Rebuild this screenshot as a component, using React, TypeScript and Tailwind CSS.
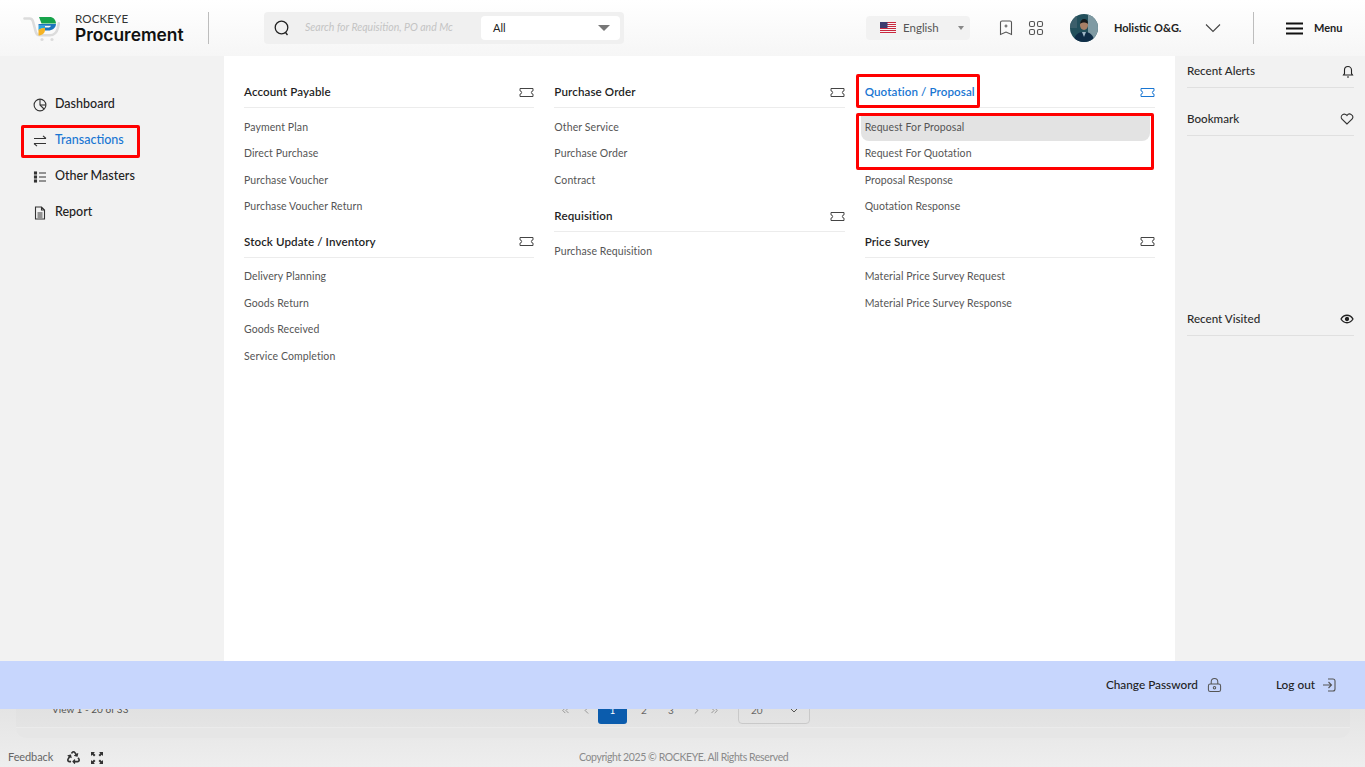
import React from "react";
import { ChevronsLeft, ChevronLeft, ChevronRight, ChevronsRight } from "lucide-react";
import { FaRecycle } from "react-icons/fa";

const Ticket = ({ blue }: { blue?: boolean }) => (
  <svg width="15" height="11" viewBox="0 0 15 11" fill="none" stroke={blue ? "#1976d2" : "#444"} strokeWidth="1">
    <path d="M1 1.500h13v2.400a1.600 1.600 0 0 0 0 3.200v2.400H1V7.100a1.600 1.600 0 0 0 0-3.200z" />
  </svg>
);

function Section({ title, blue, className = "", items, hl }: { title: React.ReactNode; blue?: boolean; className?: string; items: string[]; hl?: boolean }) {
  return (
    <div className={className}>
      <div className="relative flex h-[33px] items-center justify-between border-b border-[#ececec] pt-[2px]">
        <span className={`text-[11.6px] font-semibold tracking-[0.1px] ${blue ? "text-[#1976d2]" : "text-[#1f1f1f]"}`}>{title}</span>
        <Ticket blue={blue} />
        {hl && <span className="absolute -left-[9px] top-[-1px] h-[34px] w-[124px] rounded-[2px] border-[3px] border-[#f00]" />}
      </div>
      <ul className="relative mt-[6.5px] flex flex-col">
        {hl && <li className="absolute -left-[9px] top-[-2px] z-10 h-[57px] w-[298px] rounded-[2px] border-[3px] border-[#f00]" />}
        {items.map((t, i) => (
          <li key={t} className={`flex h-[26.4px] items-center text-[10.5px] tracking-[0.1px] text-[#555] ${hl && i === 0 ? "-ml-[4px] mr-[5px] rounded-b-[8px] bg-[#e3e3e3] pl-[4px]" : ""}`}>
            {t}
          </li>
        ))}
      </ul>
    </div>
  );
}

const Logo = () => (
  <svg width="42" height="30" viewBox="22 12 42 30" fill="none">
    <path d="M24.500 17.500h5c2 0 3 1 3.500 3l2.800 10.500c.5 2 2 3.200 4 3.200h10c4 0 7-3 8-7l1-5" stroke="#dcdcdc" strokeWidth="2.600" strokeLinecap="round" />
    <circle cx="42" cy="38.500" r="1.600" fill="#dcdcdc" />
    <circle cx="52" cy="38.500" r="1.600" fill="#dcdcdc" />
    <path d="M39 16h10.500c4 0 6 2.500 6.500 6.500H41.500z" fill="#16a34a" />
    <path d="M38.500 23H56c-.3 4-3.500 6.500-8 6.500h-3V26.500h3c1.500 0 2.500-.7 3-1.800H38.500z" fill="#1c75bc" />
    <path d="M38.500 24.700H45v2.500c-3 0-5 .8-6.500 2.300z" fill="#2aa5df" />
    <path d="M38.500 29c1.500-1.500 3.500-2 6.500-2v2c0 3-3 5.500-6.500 5.500z" fill="#f5b324" />
  </svg>
);

const Flag = () => (
  <svg width="16" height="12" viewBox="0 0 16 12">
    <rect width="16" height="12" fill="#f5f5f5" />
    {[0, 2, 4, 6, 8, 10].map((y) => (
      <rect key={y} y={y} width="16" height="1" fill="#c9283e" />
    ))}
    <rect width="7.500" height="6" fill="#3c3b6e" />
  </svg>
);

const Avatar = () => (
  <svg width="28" height="28" viewBox="0 0 28 28" className="rounded-full">
    <rect width="28" height="28" fill="#23505c" />
    <rect x="18" width="10" height="28" fill="#7f9aa3" />
    <rect width="7" height="14" fill="#3c5f6b" />
    <path d="M4 28c0-7 4-10 10-10s10 3 10 10z" fill="#0f2d47" />
    <path d="M12 18l2 5 2-5z" fill="#9fb6c6" />
    <ellipse cx="14" cy="11" rx="4" ry="5" fill="#a87f66" />
    <path d="M10 10c0-3 2-5 4-5s4 1 4 5c-2-2-6-2-8 0z" fill="#15191c" />
  </svg>
);

const side = [
  { t: "Dashboard", icon: <svg width="14" height="14" viewBox="0 0 14 14" fill="none" stroke="#333" strokeWidth="1.100"><circle cx="7" cy="7" r="5.900" /><path d="M7 1.100V7l4 4" /><path d="M7 7h5.900" /></svg> },
  { t: "Transactions", active: true, icon: <svg width="14" height="14" viewBox="0 0 14 14" fill="none" stroke="#333" strokeWidth="1.100"><path d="M1 4.500h12M10 1.800l3 2.700M13 9.500H1M4 12.200L1 9.500" /></svg> },
  { t: "Other Masters", icon: <svg width="14" height="14" viewBox="0 0 14 14" fill="none" stroke="#333" strokeWidth="1.100"><path d="M6 3h7M6 7h7M6 11h7" /><rect x="1.500" y="2" width="2" height="2" fill="#333" /><rect x="1.500" y="6" width="2" height="2" fill="#333" /><rect x="1.500" y="10" width="2" height="2" fill="#333" /></svg> },
  { t: "Report", icon: <svg width="14" height="14" viewBox="0 0 14 14" fill="none" stroke="#333" strokeWidth="1.100"><path d="M2.500 1h6l3 3v9h-9zM8.500 1v3h3M4.500 7h5M4.500 9h5M4.500 11h5" /></svg> },
];

function RightRow({ title, icon, className = "" }: { title: string; icon: React.ReactNode; className?: string }) {
  return (
    <div className={`flex h-[33px] items-center justify-between border-b border-[#e0e0e0] text-[11.6px] font-medium text-[#2b2b2b] ${className}`}>
      <span>{title}</span>
      {icon}
    </div>
  );
}

export default function App() {
  return (
    <div className="flex h-[767px] w-[1365px] flex-col overflow-hidden bg-white text-[#222]" style={{ fontFamily: '"Lato", "Liberation Sans", sans-serif' }}>
      <header className="flex h-14 shrink-0 items-center bg-gradient-to-b from-white to-[#f6f6f6]">
        <div className="ml-[22px] flex w-[186px] items-center self-stretch">
          <Logo />
          <div className="ml-[11px] flex flex-col leading-none">
            <span className="text-[11.6px] tracking-[0.1px] text-[#333]">ROCKEYE</span>
            <span className="mt-[1px] text-[17.4px] font-semibold text-[#111]" style={{ fontFamily: '"Inter", sans-serif' }}>Procurement</span>
          </div>
        </div>
        <div className="h-8 w-px bg-[#bdbdbd]" />
        <div className="ml-[55px] flex h-8 w-[360px] items-center rounded-[4px] bg-[#f0f0f0] pl-[9px] pr-[4px]">
          <svg width="18" height="18" viewBox="0 0 18 18" fill="none" stroke="#222" strokeWidth="1.300"><circle cx="8.500" cy="8.500" r="6.300" /><path d="M12.500 13.500l2 2.500" /></svg>
          <span className="ml-[14px] w-[148px] overflow-hidden whitespace-nowrap text-[10.5px] italic text-[#c4c4c4]">Search for Requisition, PO and Mc</span>
          <div className="ml-[28px] flex h-6 flex-1 items-center justify-between rounded-[4px] bg-white pl-[12px] pr-[10px] text-[11px] text-[#222]">
            <span>All</span>
            <span className="h-0 w-0 border-x-[6px] border-t-[6px] border-x-transparent border-t-[#777]" />
          </div>
        </div>
        <div className="ml-[242px] flex h-6 w-[104px] items-center rounded-[4px] bg-[#f2f2f2] pl-[14px] pr-[6px] text-[11.5px] text-[#555]">
          <Flag />
          <span className="ml-[7px] flex-1">English</span>
          <span className="h-0 w-0 border-x-[3px] border-t-[4px] border-x-transparent border-t-[#888]" />
        </div>
        <svg className="ml-[28px]" width="16" height="16" viewBox="0 0 16 16" fill="none" stroke="#555" strokeWidth="1.100"><path d="M2.500 2.500c0-.8.6-1.500 1.500-1.500h8c.9 0 1.500.7 1.500 1.500v12L8 12l-5.500 2.500zM8 4.500v3M6.500 6h3" /></svg>
        <svg className="ml-[14px]" width="16" height="16" viewBox="0 0 16 16" fill="none" stroke="#555" strokeWidth="1.100"><rect x="1.500" y="1.500" width="5" height="5" rx="1.500" /><rect x="9.500" y="1.500" width="5" height="5" rx="1.500" /><rect x="1.500" y="9.500" width="5" height="5" rx="1.500" /><rect x="9.500" y="9.500" width="5" height="5" rx="1.500" /></svg>
        <div className="ml-[26px]"><Avatar /></div>
        <span className="ml-4 w-[67px] whitespace-nowrap text-[11px] font-bold text-[#222]">Holistic O&amp;G.</span>
        <svg className="ml-[24px]" width="16" height="10" viewBox="0 0 16 10" fill="none" stroke="#444" strokeWidth="1.100"><path d="M1 1.500l7 7 7-7" /></svg>
        <div className="ml-[32px] h-8 w-px bg-[#bdbdbd]" />
        <svg className="ml-[32px]" width="17" height="13" viewBox="0 0 17 13" fill="none" stroke="#111" strokeWidth="1.800"><path d="M0 1.500h17M0 6.500h17M0 11.500h17" /></svg>
        <span className="ml-[11px] text-[11px] font-bold text-[#222]">Menu</span>
      </header>

      <div className="flex h-[605px] shrink-0">
        <aside className="w-[224px] shrink-0 bg-[#f2f2f2] pl-[33px] pt-[30.500px]">
          {side.map((s) => (
            <div key={s.t} className="relative flex h-9 items-center">
              {s.icon}
              <span className={`ml-2 text-[12.5px] font-medium ${s.active ? "text-[#1976d2]" : "text-[#222]"}`}>{s.t}</span>
              {s.active && <span className="absolute -left-3 top-[2.500px] h-[33px] w-[119px] rounded-[2px] border-[3px] border-[#f00]" />}
            </div>
          ))}
        </aside>
        <main className="grid flex-1 grid-cols-3 content-start items-start gap-x-5 px-5 pt-[19px]">
          <div>
            <Section title="Account Payable" items={["Payment Plan", "Direct Purchase", "Purchase Voucher", "Purchase Voucher Return"]} />
            <Section className="mt-[4.5px]" title="Stock Update / Inventory" items={["Delivery Planning", "Goods Return", "Goods Received", "Service Completion"]} />
          </div>
          <div>
            <Section title="Purchase Order" items={["Other Service", "Purchase Order", "Contract"]} />
            <Section className="mt-[5.5px]" title="Requisition" items={["Purchase Requisition"]} />
          </div>
          <div>
            <Section hl blue title="Quotation / Proposal" items={["Request For Proposal", "Request For Quotation", "Proposal Response", "Quotation Response"]} />
            <Section className="mt-[4.5px]" title="Price Survey" items={["Material Price Survey Request", "Material Price Survey Response"]} />
          </div>
        </main>
        <aside className="w-[190px] shrink-0 bg-[#f2f2f2] pl-3 pr-[11px]">
          <RightRow className="mt-[-1px]" title="Recent Alerts" icon={<svg width="12" height="13" viewBox="0 0 12 13" fill="none" stroke="#222" strokeWidth="1.100"><path d="M1.500 10h9L9.500 8.500V5a3.500 3.500 0 0 0-7 0v3.500zM5 12h2" /></svg>} />
          <RightRow className="mt-[15px]" title="Bookmark" icon={<svg width="14" height="12" viewBox="0 0 14 12" fill="none" stroke="#333" strokeWidth="1.100"><path d="M7 11L1.800 6A3 3 0 0 1 7 2.500 3 3 0 0 1 12.200 6z" /></svg>} />
          <RightRow className="mt-[167px]" title="Recent Visited" icon={<svg width="14" height="10" viewBox="0 0 14 10" fill="none" stroke="#222" strokeWidth="1.300"><path d="M1 5c3-5 9-5 12 0-3 5-9 5-12 0z" /><circle cx="7" cy="5" r="1.500" fill="#222" /></svg>} />
        </aside>
      </div>

      <div className="relative z-10 flex h-12 shrink-0 items-center justify-end bg-[#c7d6fd] pb-[1px] pr-[29px] text-[11.8px] font-medium text-[#222]">
        <span>Change Password</span>
        <svg className="ml-[9px]" width="15" height="16" viewBox="0 0 16 16" fill="none" stroke="#555" strokeWidth="1.100"><path d="M4.500 7V4.500a3.500 3.500 0 0 1 7 0V7" /><rect x="1.500" y="7" width="13" height="8" rx="2" /><circle cx="8" cy="11" r="1.300" /></svg>
        <span className="ml-[54px]">Log out</span>
        <svg className="ml-[7px]" width="14" height="14" viewBox="0 0 14 14" fill="none" stroke="#555" strokeWidth="1.100"><path d="M1 7h8M6.500 4l3 3-3 3M6 1h4.500A2 2 0 0 1 13 3v8a2 2 0 0 1-2 2H6" /></svg>
      </div>

      <div className="flex flex-1 flex-col bg-gradient-to-b from-[#e4e4e4] to-[#eeeeee]">
        <div className="-mt-5 ml-4 mr-[15px] h-[49px] shrink-0 overflow-hidden rounded-b-[10px] bg-[#e6e6e6]">
          <div className="flex h-[39px] items-start border-b border-[#ebebeb] bg-gradient-to-b from-[#dedede] to-[#e4e4e4] pl-9 text-[10px] text-[#666]">
            <span className="mt-[13px] w-[508px] text-[#555]">View 1 - 20 of 33</span>
            <ChevronsLeft className="mt-[16px]" size={11} strokeWidth={1.300} />
            <ChevronLeft className="ml-[10px] mt-[16px]" size={11} strokeWidth={1.300} />
            <span className="ml-[6px] flex h-[35px] w-[29px] items-center justify-center rounded-[3px] bg-[#0b5cad] pt-[7px] text-white">1</span>
            <span className="mt-[14px] w-[34px] text-center">2</span>
            <span className="mt-[14px] w-[20px] text-center">3</span>
            <ChevronRight className="ml-[10px] mt-[16px]" size={11} strokeWidth={1.300} />
            <ChevronsRight className="ml-[7px] mt-[16px]" size={11} strokeWidth={1.300} />
            <span className="ml-[18px] flex h-[35px] w-[72px] items-center justify-between rounded-[4px] border border-[#c9c9c9] pl-3 pr-[10px] pt-[7px]">20<svg width="10" height="6" viewBox="0 0 10 6" fill="none" stroke="#555"><path d="M1 1l4 4 4-4" /></svg></span>
          </div>
        </div>
        <div className="relative flex flex-1 items-center pl-2 pt-[10px] text-[11px] tracking-[-0.1px] text-[#666]">
          <span>Feedback</span>
          <FaRecycle className="ml-[14px] text-[#333]" size={13} />
          <svg className="ml-[10px]" width="14" height="14" viewBox="0 0 14 14" fill="#333"><path d="M1 1h4L3.700 2.300 5.500 4 4 5.500 2.300 3.700 1 5zM13 1v4l-1.300-1.300L10 5.500 8.500 4l1.800-1.700L9 1zM1 13V9l1.300 1.300L4 8.500 5.500 10l-1.800 1.700L5 13zM13 13H9l1.300-1.300L8.500 10 10 8.500l1.700 1.800L13 9z" /></svg>
          <span className="absolute left-[579px] text-[10.5px] tracking-[-0.4px] text-[#8a8a8a]">Copyright 2025 © ROCKEYE. All Rights Reserved</span>
        </div>
      </div>
    </div>
  );
}
